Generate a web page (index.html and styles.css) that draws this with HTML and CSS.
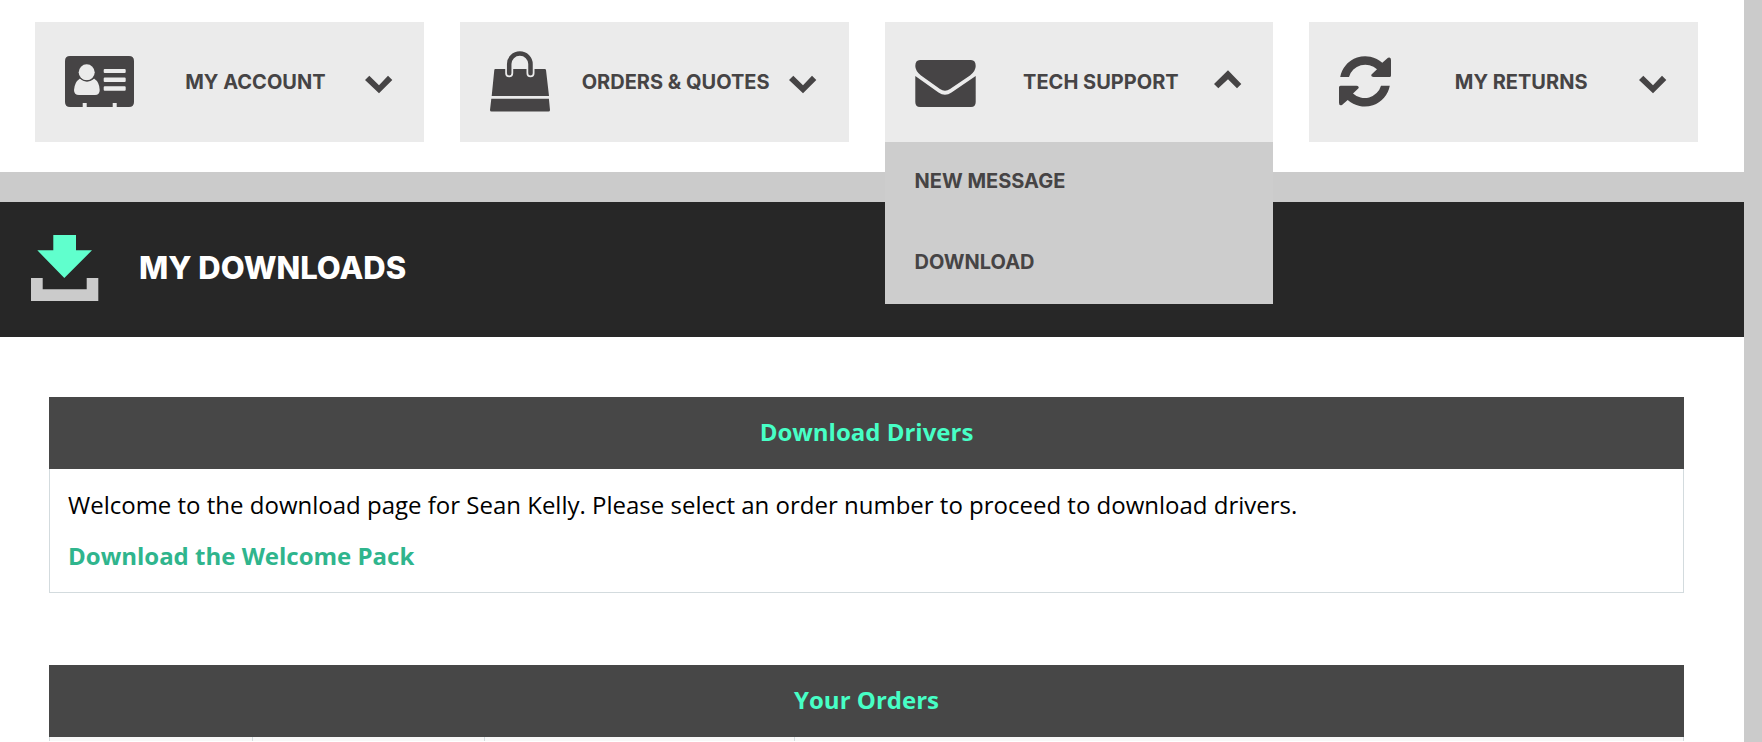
FILE: index.html
```html
<!DOCTYPE html>
<html lang="en">
<head>
<meta charset="utf-8">
<title>My Downloads</title>
<link rel="stylesheet" href="styles.css">
</head>
<body>
<nav class="account-nav" aria-label="Account">
  <div class="nav-item">
    <button class="nav-button" type="button" aria-expanded="false">
      <svg width="69" height="62" viewBox="0 0 69 62" aria-hidden="true">
        <path fill="#464445" d="M5 5H64Q69 5 69 10V51Q69 56 64 56H51.700V52H47.700V56H21.700V52H17.700V56H5Q0 56 0 51V10Q0 5 5 5Z"/>
        <path fill="#ebebeb" d="M15 27.500Q22 33 29 27.500Q34.500 31 34.700 39Q34.700 44 30 44H14Q9 44 9 39Q9.500 31 15 27.500Z"/>
        <circle cx="21.700" cy="21.300" r="8" fill="#ebebeb"/>
        <path d="M15 27.300Q22 33 29 27.300" fill="none" stroke="#464445" stroke-width="1"/>
        <path fill="#ebebeb" d="M39.700 18H59.700Q60.700 18 60.700 19V21Q60.700 22 59.700 22H39.700Q38.700 22 38.700 21V19Q38.700 18 39.700 18ZM39.700 26.500H59.700Q60.700 26.500 60.700 27.500V30Q60.700 31 59.700 31H39.700Q38.700 31 38.700 30V27.500Q38.700 26.500 39.700 26.500ZM39.700 35.300H59.700Q60.700 35.300 60.700 36.300V38.700Q60.700 39.700 59.700 39.700H39.700Q38.700 39.700 38.700 38.700V36.300Q38.700 35.300 39.700 35.300Z"/>
      </svg>
      <span class="nav-label">MY ACCOUNT</span>
      <svg width="28" height="24" viewBox="0 0 28 24" aria-hidden="true"><path fill="#464445" d="M4.300 5.700 14 15.200 23 5.700 27.300 10 14 23.300 0 10Z"/></svg>
    </button>
  </div>
  <div class="nav-item">
    <button class="nav-button" type="button" aria-expanded="false">
      <svg width="60" height="62" viewBox="0 0 60 62" aria-hidden="true">
        <path fill="#464445" d="M5.300 18H54.700Q55.900 18 56 19L59 45H1.700L4.300 19Q4.300 18 5.300 18ZM1.300 47.700H58.900L60 59Q60 60.500 58.500 60.500H1.500Q0 60.500 0 59Z"/>
        <path d="M19.200 18V22.300M40.500 18V22.300" fill="none" stroke="#ebebeb" stroke-width="8" stroke-linecap="round"/>
        <path d="M19.200 22.300V13.100A10.650 10.650 0 0 1 40.500 13.100V22.300" fill="none" stroke="#464445" stroke-width="4.500" stroke-linecap="round"/>
      </svg>
      <span class="nav-label">ORDERS &amp; QUOTES</span>
      <svg width="28" height="24" viewBox="0 0 28 24" aria-hidden="true"><path fill="#464445" d="M4.300 5.700 14 15.200 23 5.700 27.300 10 14 23.300 0 10Z"/></svg>
    </button>
  </div>
  <div class="nav-item">
    <button class="nav-button" type="button" aria-expanded="true" aria-controls="support-menu">
      <svg width="61" height="62" viewBox="0 0 61 62" aria-hidden="true">
        <path fill="#464445" d="M5 9H56Q60.700 9 60.700 15Q60.700 20 55 24.500L35 38Q30 41.500 25 38L6 24.500Q.3 20 .3 15Q.3 9 5 9ZM.3 25 23.500 41.500Q30 46 36.500 41.500L60.700 25V51Q60.700 56 56 56H5Q.3 56 .3 51Z"/>
      </svg>
      <span class="nav-label">TECH SUPPORT</span>
      <svg width="28" height="24" viewBox="0 0 28 24" aria-hidden="true"><path fill="#464445" d="M14 .3 27.300 14 23 18.300 14 9.300 4.300 18.300 0 14Z"/></svg>
    </button>
    <ul class="submenu" id="support-menu">
      <li><a class="submenu-link" href="#message">NEW MESSAGE</a></li>
      <li><a class="submenu-link" href="#download">DOWNLOAD</a></li>
    </ul>
  </div>
  <div class="nav-item">
    <button class="nav-button" type="button" aria-expanded="false">
      <svg width="52" height="62" viewBox="0 0 52 62" aria-hidden="true">
        <defs><path id="half-turn" d="M1.200 26A25.500 25.500 0 0 1 43.300 11.700L49 6.800Q52 5.500 52 9V24.500Q52 26 50.500 26H34.500Q31.500 25.500 32.500 23.500L38 18.300A17 17 0 0 0 10 26Z"/></defs>
        <use href="#half-turn" fill="#464445"/>
        <use href="#half-turn" fill="#464445" transform="rotate(180 26 30.350)"/>
      </svg>
      <span class="nav-label">MY RETURNS</span>
      <svg width="28" height="24" viewBox="0 0 28 24" aria-hidden="true"><path fill="#464445" d="M4.300 5.700 14 15.200 23 5.700 27.300 10 14 23.300 0 10Z"/></svg>
    </button>
  </div>
</nav>
<header class="page-header">
  <svg width="68" height="66" viewBox="0 0 68 66" aria-hidden="true">
    <path fill="#60ffcd" d="M22.300 0H45V15.300H61L33.300 43 6.300 15.300H22.300Z"/>
    <path fill="#cbcbcb" d="M0 43H11.700V54.300H55.700V43H67.300V66H0Z"/>
  </svg>
  <h1 class="page-title">MY DOWNLOADS</h1>
</header>
<main class="content">
  <table class="panel">
    <thead><tr><th class="panel-heading">Download Drivers</th></tr></thead>
    <tbody><tr><td class="panel-body">
      <p class="welcome">Welcome to the download page for Sean Kelly. Please select an order number to proceed to download drivers.</p>
      <a class="welcome-link" href="#welcome-pack">Download the Welcome Pack</a>
    </td></tr></tbody>
  </table>
  <table class="panel">
    <colgroup><col class="col-order"><col class="col-date"><col class="col-status"><col></colgroup>
    <thead><tr><th class="panel-heading" colspan="4">Your Orders</th></tr></thead>
    <tbody><tr><td class="order-cell"></td><td class="order-cell"></td><td class="order-cell"></td><td class="order-cell"></td></tr></tbody>
  </table>
</main>
</body>
</html>
```

FILE: styles.css
```css
* { box-sizing: border-box; }

html { height: 100%; }

body {
  display: flex;
  flex-direction: column;
  height: 100%;
  margin: 0;
  padding-right: 18px;
  background: #cbcbcb;
  color: #000;
  font-family: "Open Sans", sans-serif;
  font-size: 24px;
  line-height: 32px;
}

.account-nav {
  display: grid;
  grid-template-columns: repeat(4, minmax(0, 1fr));
  gap: 36px;
  padding: 22px 46px 30px 35px;
  background: #fff;
}

.nav-item { position: relative; }

.nav-button {
  display: flex;
  align-items: center;
  justify-content: space-between;
  width: 100%;
  height: 120px;
  padding: 0 31px 0 30px;
  border: 0;
  background: #ebebeb;
  color: #464445;
  font: bold 20px/24px Inter, sans-serif;
  white-space: nowrap;
}

.nav-label { padding-left: 12px; }

.submenu {
  position: absolute;
  top: 100%;
  left: 0;
  z-index: 1;
  width: 100%;
  margin: 0;
  padding: 0;
  background: #cdcdcd;
  list-style: none;
}

.submenu-link {
  display: block;
  padding: 27px 30px 30px;
  color: #464445;
  font: bold 20px/24px Inter, sans-serif;
  text-decoration: none;
}

.page-header {
  display: flex;
  align-items: center;
  gap: 40px;
  margin-top: 30px;
  padding: 33px 31px 36px;
  background: #272727;
}

.page-title {
  margin: 0;
  color: #fff;
  font: 800 31px/36px Inter, sans-serif;
}

/* The orders list is clipped to the space left under the header. */
.content {
  flex: 1;
  min-height: 0;
  padding: 60px 60px 0 49px;
  overflow: hidden;
  background: #fff;
}

.panel {
  width: 100%;
  margin-bottom: 72px;
  border-collapse: separate;
  border-spacing: 0;
  table-layout: fixed;
}

.panel:last-child { margin-bottom: 0; }

.panel-heading {
  padding: 19px 20px 21px;
  background: #474747;
  color: #47ffc6;
  font-weight: bold;
}

.panel-body {
  padding: 20px 18px;
  border: 1px solid #d3dbde;
  border-top: 0;
}

.welcome { margin: 0 0 19px; }

.welcome-link {
  color: #2fb58d;
  font-weight: bold;
  text-decoration: none;
}

.order-cell {
  padding: 2px;
  border-left: 1px solid #d3dbde;
  background: #f8f8f8;
}

.order-cell:last-child { border-right: 1px solid #d3dbde; }

.col-order { width: 203px; }
.col-date { width: 232px; }
.col-status { width: 310px; }
```
